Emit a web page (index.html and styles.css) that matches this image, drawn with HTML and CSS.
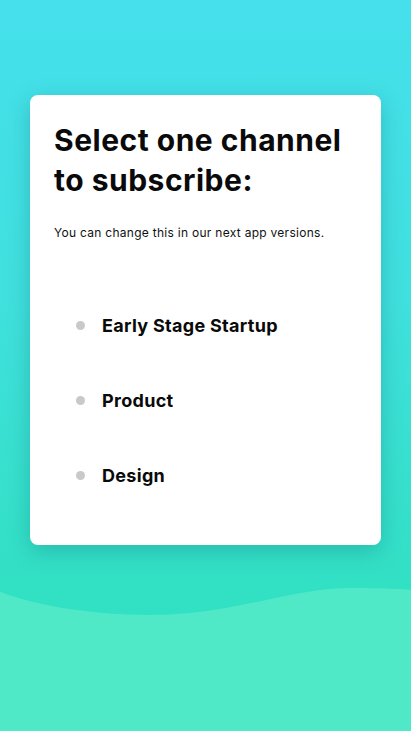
FILE: index.html
```html
<!DOCTYPE html>
<html>
<head>
  <title>Subscribe</title>
  <link rel="stylesheet" href="styles.css">
</head>
<body>

  <svg class="wave" viewBox="0 0 411 150" preserveAspectRatio="none">
    <path d="M0 6 C 50 26, 130 34, 190 28 C 250 22, 300 2, 350 2 C 380 2, 400 3, 411 4 L 411 150 L 0 150 Z" fill="#50e9c7"/>
  </svg>

  <div class="card">
    <h1>Select one channel to subscribe:</h1>
    <p class="note">You can change this in our next app versions.</p>

    <ul class="channels">
      <li><span class="dot"></span>Early Stage Startup</li>
      <li><span class="dot"></span>Product</li>
      <li><span class="dot"></span>Design</li>
    </ul>
  </div>

</body>
</html>
```

FILE: styles.css
```css
html, body {
  height: 100%;
}
body {
  margin: 0;
  font-family: "Inter", "Noto Sans", sans-serif;
  background: linear-gradient(to bottom, #45e0ec 0%, #40e0de 40%, #32e0c4 80%);
  padding: 95px 30px 0;
  box-sizing: border-box;
  position: relative;
  overflow: hidden;
}
.wave {
  position: absolute;
  left: 0;
  bottom: 0;
  width: 411px;
  height: 145px;
  z-index: 0;
}
.card {
  position: relative;
  z-index: 1;
  background: #fff;
  border-radius: 8px;
  height: 450px;
  box-sizing: border-box;
  padding: 25px 24px 0;
  box-shadow: 0 6px 22px rgba(0, 90, 100, 0.28);
}
h1 {
  margin: 0;
  font-size: 30px;
  line-height: 40px;
  font-weight: 700;
  letter-spacing: 0.5px;
  color: #0a0a0a;
}
.note {
  margin: 25px 0 0;
  font-size: 12px;
  color: #111;
  letter-spacing: 0.28px;
}
.channels {
  list-style: none;
  margin: 48px 0 0;
  padding: 0 0 0 22px;
}
.channels li {
  display: flex;
  align-items: center;
  height: 75px;
  font-size: 18px;
  font-weight: 700;
  letter-spacing: 0.3px;
  color: #0a0a0a;
}
.dot {
  width: 9px;
  height: 9px;
  border-radius: 50%;
  background: #c9c9c9;
  margin-right: 17px;
}
```
